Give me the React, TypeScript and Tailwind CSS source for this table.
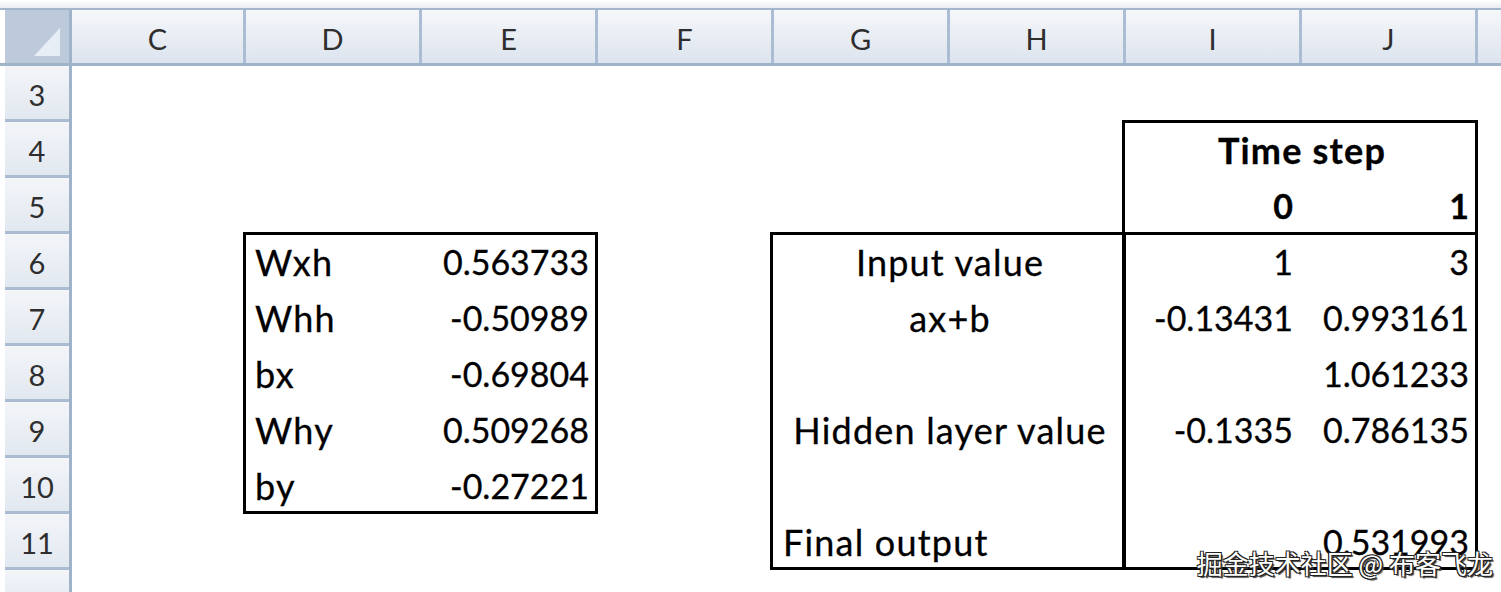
import React from "react";

const COLS: [string, string][] = [
  ["C", "w-[174px]"],
  ["D", "w-[176px]"],
  ["E", "w-[176px]"],
  ["F", "w-[176px]"],
  ["G", "w-[176px]"],
  ["H", "w-[176px]"],
  ["I", "w-[176px]"],
  ["J", "w-[176px]"],
];
const ROWS = ["3", "4", "5", "6", "7", "8", "9", "10", "11"];

// label text in Calibri is wider than Lato, so words get a larger size + tracking than the numbers
function Cell({ at, align = "right", bold, label, children }: { at: string; align?: "left" | "right" | "center"; bold?: boolean; label?: boolean; children: React.ReactNode }) {
  const a = align === "left" ? "justify-start pl-[9px]" : align === "center" ? "justify-center" : "justify-end pr-[9px]";
  const size = label ? "text-[36px] tracking-[1.2px] pb-[10px]" : "text-[34px] pb-[11px]";
  return (
    <div className={`${at} flex items-end whitespace-nowrap leading-none text-black [-webkit-text-stroke:0.3px_black] ${size} ${a} ${bold ? "font-bold" : ""}`}>
      {children}
    </div>
  );
}

export default function App() {
  return (
    <div className="relative h-[592px] w-[1501px] overflow-hidden bg-white font-['Lato','Liberation_Sans',sans-serif]">
      {/* top strip */}
      <div className="h-[10px] border-b-2 border-[#a3b6cb] bg-gradient-to-b from-white to-[#e9edf2]" />

      {/* column headers */}
      <div className="flex h-[56px] border-b-[3px] border-[#9fb3c9]">
        <div className="w-[5px] bg-white" />
        <div className="relative w-[67px] border-r-[3px] border-[#9fb3c9] bg-[#bccadc]">
          <svg className="absolute right-[8px] bottom-[6px]" width="28" height="30" viewBox="0 0 28 30">
            <polygon points="27,1 27,29 1,29" fill="#e8eef6" />
          </svg>
        </div>
        {COLS.map(([c, w]) => (
          <div
            key={c}
            className={`${w} flex items-center justify-center border-r-[3px] border-[#aabdd2] bg-gradient-to-b from-[#f5f7fa] to-[#dde4ee] pt-[4px] text-[29px] text-[#2e2e2e]`}
          >
            {c}
          </div>
        ))}
        <div className="flex-1 bg-gradient-to-b from-[#f5f7fa] to-[#dde4ee]" />
      </div>

      {/* body */}
      <div className="flex">
        <div className="w-[5px]" />
        <div className="flex w-[67px] flex-col border-r-[3px] border-[#9fb3c9]">
          {ROWS.map((r) => (
            <div
              key={r}
              className="flex h-[56px] items-center justify-center border-b-[3px] border-[#aabdd2] bg-gradient-to-b from-[#f3f5f9] to-[#e2e8f0] pt-[4px] text-[29px] text-[#2e2e2e]"
            >
              {r}
            </div>
          ))}
          <div className="h-[40px] bg-gradient-to-b from-[#f3f5f9] to-[#e2e8f0]" />
        </div>

        <div className="grid flex-1 grid-cols-[174px_repeat(7,176px)_1fr] grid-rows-[repeat(9,56px)]">
          {/* boxes */}
          <div className="col-span-2 col-start-2 row-span-5 row-start-4 -mt-[2px] -ml-[3px] border-[3px] border-black" />
          <div className="col-span-2 col-start-5 row-span-6 row-start-4 -mt-[2px] -ml-[4px] border-[3px] border-black" />
          <div className="col-span-2 col-start-7 row-span-8 row-start-2 -mt-[2px] -ml-[4px] border-[3px] border-black" />
          <div className="col-span-2 col-start-7 row-start-3 -mb-[1px] -ml-[4px] border-b-[3px] border-black" />

          {/* parameters */}
          <Cell at="col-start-2 row-start-4" align="left" label>Wxh</Cell>
          <Cell at="col-start-3 row-start-4">0.563733</Cell>
          <Cell at="col-start-2 row-start-5" align="left" label>Whh</Cell>
          <Cell at="col-start-3 row-start-5">-0.50989</Cell>
          <Cell at="col-start-2 row-start-6" align="left" label>bx</Cell>
          <Cell at="col-start-3 row-start-6">-0.69804</Cell>
          <Cell at="col-start-2 row-start-7" align="left" label>Why</Cell>
          <Cell at="col-start-3 row-start-7">0.509268</Cell>
          <Cell at="col-start-2 row-start-8" align="left" label>by</Cell>
          <Cell at="col-start-3 row-start-8">-0.27221</Cell>

          {/* time steps */}
          <Cell at="col-span-2 col-start-7 row-start-2" align="center" bold label>Time step</Cell>
          <Cell at="col-start-7 row-start-3" bold>0</Cell>
          <Cell at="col-start-8 row-start-3" bold>1</Cell>

          <Cell at="col-span-2 col-start-5 row-start-4" align="center" label>Input value</Cell>
          <Cell at="col-start-7 row-start-4">1</Cell>
          <Cell at="col-start-8 row-start-4">3</Cell>

          <Cell at="col-span-2 col-start-5 row-start-5" align="center" label>ax+b</Cell>
          <Cell at="col-start-7 row-start-5">-0.13431</Cell>
          <Cell at="col-start-8 row-start-5">0.993161</Cell>

          <Cell at="col-start-8 row-start-6">1.061233</Cell>

          <Cell at="col-span-2 col-start-5 row-start-7" align="center" label>Hidden layer value</Cell>
          <Cell at="col-start-7 row-start-7">-0.1335</Cell>
          <Cell at="col-start-8 row-start-7">0.786135</Cell>

          <Cell at="col-span-2 col-start-5 row-start-9" align="left" label>Final output</Cell>
          <Cell at="col-start-8 row-start-9">0.531993</Cell>
        </div>
      </div>

      {/* watermark */}
      <div className="absolute right-[8px] bottom-[16px] font-['Noto_Sans_CJK_SC',sans-serif] text-[26px] leading-none text-white [text-shadow:1px_1px_0_#222,-1px_-1px_0_#222,1px_-1px_0_#222,-1px_1px_0_#222,2px_2px_1px_#444]">
        掘金技术社区 @ 布客飞龙
      </div>
    </div>
  );
}
